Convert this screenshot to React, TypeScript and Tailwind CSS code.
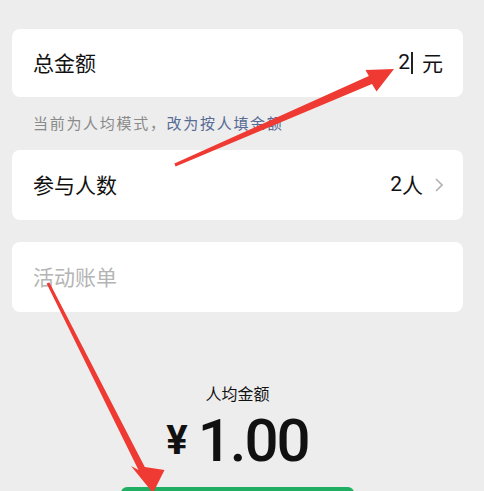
const font = { fontFamily: '"Noto Sans CJK SC", "Noto Sans", sans-serif' };

function Arrows() {
  return (
    <svg className="absolute inset-0 pointer-events-none" width="484" height="491" viewBox="0 0 484 491">
      <polygon
        fill="#ee3a32"
        points="175.6,166.6 372,84 376.5,91.5 394,69 365.5,70 368.8,76 174.4,163.6"
      />
      <polygon
        fill="#ee3a32"
        points="46.6,283.6 138.5,470 131,466 153,493 164.5,470 144.8,467 49.4,282.4"
      />
    </svg>
  );
}

export default function App() {
  return (
    <div className="relative w-[484px] h-[491px] overflow-hidden bg-[#ededed]" style={font}>
      <div className="flex flex-col pl-3 pr-[21px] pt-[29px]">
        <div className="h-[68px] bg-white rounded-lg flex items-center justify-between pl-[21px] pr-[20px]">
          <span className="text-[21px] text-[#111]">总金额</span>
          <span className="flex items-center text-[21px] text-[#111]">
            <span style={{ fontFamily: 'Roboto, sans-serif' }}>2</span>
            <span className="w-[2px] h-[22px] bg-[#222] ml-[1px]"></span>
            <span className="ml-[9px]">元</span>
          </span>
        </div>
        <div className="h-[53px] flex items-center pl-[21px] text-[15px] tracking-[1.7px]">
          <span className="text-[#8a8a8a]">当前为人均模式，</span>
          <span className="text-[#576b95]">改为按人填金额</span>
        </div>
        <div className="h-[70px] bg-white rounded-lg flex items-center justify-between pl-[21px] pr-[20px]">
          <span className="text-[21px] text-[#111]">参与人数</span>
          <span className="flex items-center text-[21px] text-[#111]">
            <span style={{ fontFamily: 'Roboto, sans-serif' }}>2</span>
            <span>人</span>
            <svg className="ml-[12px]" width="8" height="14" viewBox="0 0 8 14">
              <path d="M1 1l6 6-6 6" fill="none" stroke="#b2b2b2" strokeWidth="1.6" />
            </svg>
          </span>
        </div>
        <div className="h-[70px] mt-[22px] bg-white rounded-lg flex items-center pl-[21px]">
          <span className="text-[21px] text-[#b4b4b4]">活动账单</span>
        </div>
        <div className="flex flex-col items-center mt-[70px]">
          <span className="text-[16px] text-[#111] leading-[22px]">人均金额</span>
          <div className="flex items-end mt-[6px] text-[#111]" style={{ fontFamily: 'Roboto, sans-serif' }}>
            <span className="text-[40px] font-bold leading-none mb-[11px] mr-[10px]">¥</span>
            <span className="text-[60px] font-medium leading-[62px] tracking-[-2px]">1.00</span>
          </div>
        </div>
        <div className="mt-[15px] mx-auto w-[233px] h-[44px] rounded-md bg-[#1fae62]"></div>
      </div>
      <Arrows />
    </div>
  );
}
